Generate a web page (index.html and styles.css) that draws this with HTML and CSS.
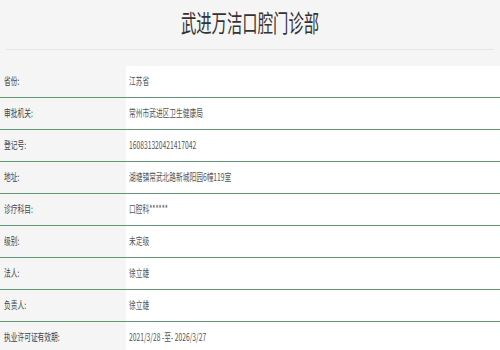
FILE: index.html
```html
<!DOCTYPE html>
<html lang="zh-CN">
<head>
<meta charset="utf-8">
<title>武进万洁口腔门诊部</title>
<link rel="stylesheet" href="styles.css">
</head>
<body>
<header class="header">
  <h1 class="title"><span class="sq sq-center">武进万洁口腔门诊部</span></h1>
</header>
<div class="divider"></div>
<div class="table">
  <div class="row"><div class="label"><span class="sq">省份:</span></div><div class="value"><span class="sq">江苏省</span></div></div>
  <div class="row"><div class="label"><span class="sq">审批机关:</span></div><div class="value"><span class="sq">常州市武进区卫生健康局</span></div></div>
  <div class="row"><div class="label"><span class="sq">登记号:</span></div><div class="value"><span class="sq">160831320421417042</span></div></div>
  <div class="row"><div class="label"><span class="sq">地址:</span></div><div class="value"><span class="sq">湖塘镇常武北路新城阳园6幢119室</span></div></div>
  <div class="row"><div class="label"><span class="sq">诊疗科目:</span></div><div class="value"><span class="sq">口腔科******</span></div></div>
  <div class="row"><div class="label"><span class="sq">级别:</span></div><div class="value"><span class="sq">未定级</span></div></div>
  <div class="row"><div class="label"><span class="sq">法人:</span></div><div class="value"><span class="sq">徐立雄</span></div></div>
  <div class="row"><div class="label"><span class="sq">负责人:</span></div><div class="value"><span class="sq">徐立雄</span></div></div>
  <div class="row"><div class="label"><span class="sq">执业许可证有效期:</span></div><div class="value"><span class="sq">2021/3/28 -至- 2026/3/27</span></div></div>
</div>
</body>
</html>
```
FILE: styles.css
```css
html, body {
  margin: 0;
  padding: 0;
  background: #f5f5f5;
  font-family: "Noto Sans CJK SC", "Noto Sans", sans-serif;
}

.header {
  height: 49px;
  display: flex;
  align-items: center;
  justify-content: center;
}

.title {
  margin: 0;
  font-size: 24px;
  font-weight: 400;
  line-height: 1;
  color: #333;
  white-space: nowrap;
  padding-bottom: 6px;
}

.sq {
  display: inline-block;
  transform: scaleX(0.64);
  transform-origin: left center;
  white-space: nowrap;
}

.sq-center {
  transform-origin: center center;
}

.divider {
  height: 1px;
  background: #e6e6e6;
  margin: 0 6px;
}

.table {
  margin-top: 16px;
}

.row {
  display: grid;
  grid-template-columns: 126px 1fr;
  height: 31px;
  border-bottom: 1px solid #629574;
  font-size: 10.5px;
  line-height: 1;
}

.label {
  display: flex;
  align-items: center;
  padding-left: 4px;
  color: #444;
  background: #f5f5f5;
}

.value {
  display: flex;
  align-items: center;
  padding-left: 3px;
  color: #555;
  background: #fff;
}
```
